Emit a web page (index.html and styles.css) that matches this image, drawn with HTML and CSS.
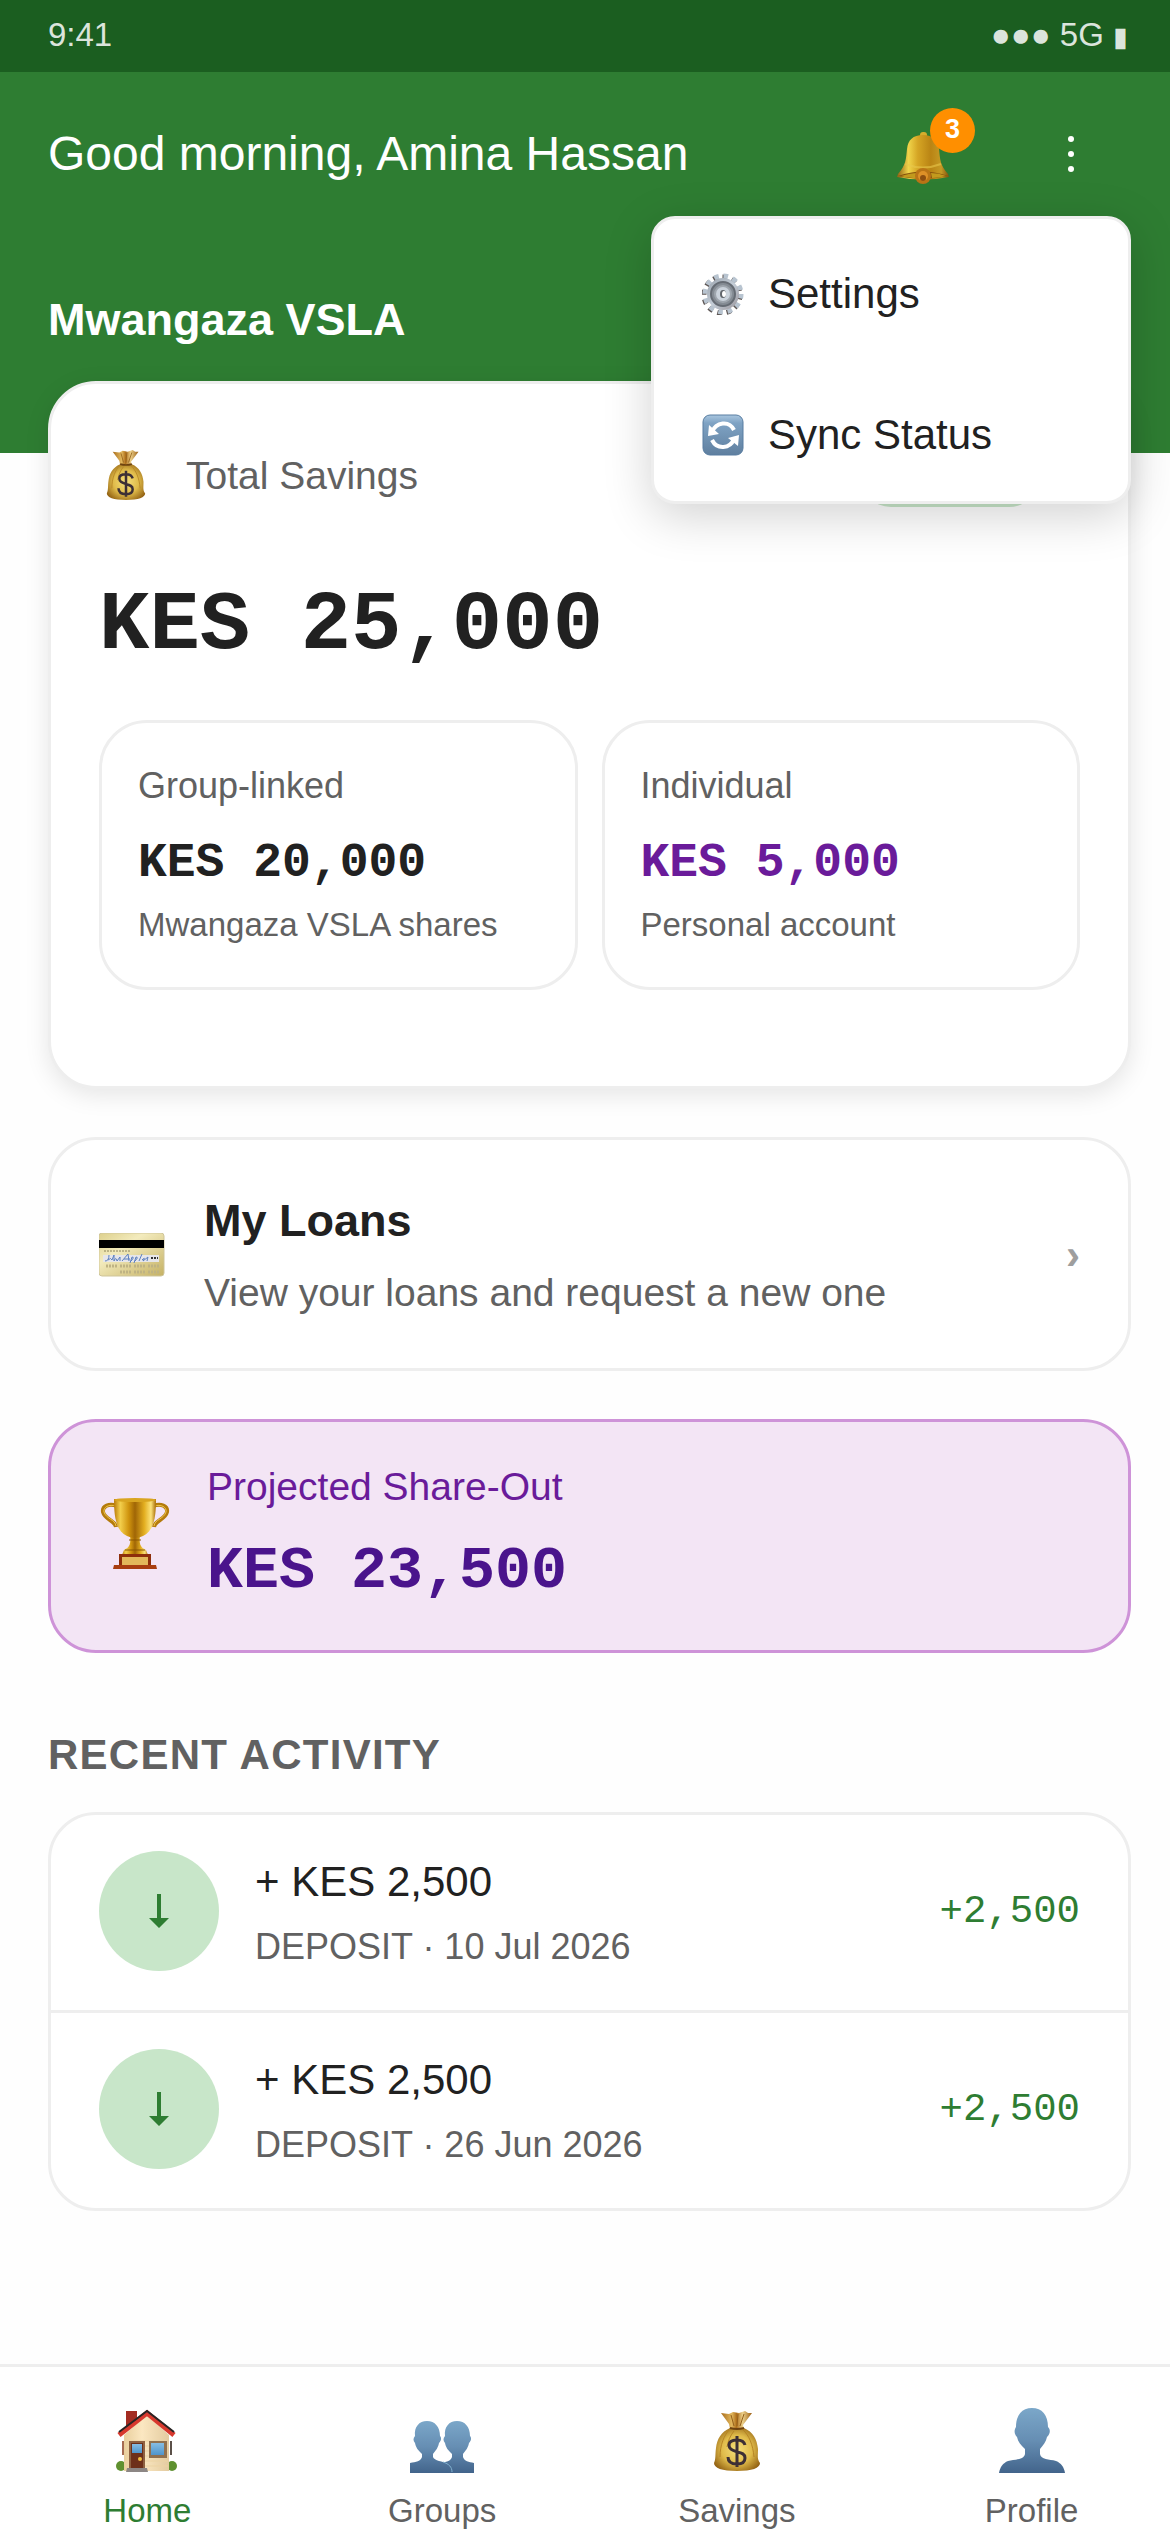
FILE: index.html
```html
<!DOCTYPE html>
<html lang="en">
<head>
<meta charset="utf-8">
<meta name="viewport" content="width=device-width, initial-scale=1">
<title>Mwangaza VSLA</title>
<link rel="stylesheet" href="styles.css">
</head>
<body>
<svg class="defs" aria-hidden="true">
  <defs>
    <linearGradient id="gold" x1="0" x2="1" y1="0" y2="0">
      <stop offset="0" stop-color="#8f5e12"/><stop offset=".22" stop-color="#f0d44a"/><stop offset=".4" stop-color="#d5a524"/><stop offset=".65" stop-color="#b98414"/><stop offset=".85" stop-color="#c59a25"/><stop offset="1" stop-color="#80500d"/>
    </linearGradient>
    <linearGradient id="cup" x1="0" x2="1" y1="0" y2="0">
      <stop offset="0" stop-color="#b97a08"/><stop offset=".15" stop-color="#f3cf4c"/><stop offset=".35" stop-color="#d0940e"/><stop offset=".5" stop-color="#a06606"/><stop offset=".72" stop-color="#e3ae20"/><stop offset=".88" stop-color="#fbe27a"/><stop offset="1" stop-color="#a96c06"/>
    </linearGradient>
    <radialGradient id="sack" cx=".5" cy=".5" r=".6">
      <stop offset="0" stop-color="#f6e07c"/><stop offset=".55" stop-color="#e0bb4a"/><stop offset="1" stop-color="#916012"/>
    </radialGradient>
    <linearGradient id="neck" x1="0" x2="1" y1="0" y2="0">
      <stop offset="0" stop-color="#a96d1c"/><stop offset=".35" stop-color="#e2b85e"/><stop offset=".5" stop-color="#b0701c"/><stop offset=".7" stop-color="#ecd08a"/><stop offset="1" stop-color="#9c5f14"/>
    </linearGradient>
    <linearGradient id="person" x1="0" x2="0" y1="0" y2="1">
      <stop offset="0" stop-color="#7ba7c9"/><stop offset=".5" stop-color="#668eb3"/><stop offset="1" stop-color="#42648b"/>
    </linearGradient>
    <linearGradient id="tile" x1="0" x2="0" y1="0" y2="1">
      <stop offset="0" stop-color="#a9c6df"/><stop offset=".2" stop-color="#7fa3c4"/><stop offset="1" stop-color="#5f7f9f"/>
    </linearGradient>
    <linearGradient id="steel" x1="0" x2="1" y1="0" y2="1">
      <stop offset="0" stop-color="#9aa3ad"/><stop offset=".5" stop-color="#c3ccd6"/><stop offset="1" stop-color="#99949a"/>
    </linearGradient>
    <linearGradient id="plastic" x1="0" x2="1" y1="0" y2="1">
      <stop offset="0" stop-color="#ddd08c"/><stop offset=".35" stop-color="#f3ebbd"/><stop offset="1" stop-color="#c5b163"/>
    </linearGradient>
    <linearGradient id="wall" x1="0" x2="1" y1="0" y2="0">
      <stop offset="0" stop-color="#e9cf9d"/><stop offset=".4" stop-color="#fbe7c1"/><stop offset="1" stop-color="#e3cba0"/>
    </linearGradient>
    <linearGradient id="sky" x1="0" x2="0" y1="0" y2="1">
      <stop offset="0" stop-color="#86bde2"/><stop offset="1" stop-color="#4f95cc"/>
    </linearGradient>
    <symbol id="moneybag" viewBox="0 0 46 60">
      <path d="M7 2 15 3 19 1 25 2 31 0 34 2 38 2 29 14 30 18H16L15 13Z" fill="url(#neck)"/>
      <path d="M17 4 20 15M24 3 23 15M30 3 26 15" stroke="#94601b" stroke-width="1" fill="none"/>
      <path d="M16 17H30C39 21 43 28 44 38 44 45 43 48 46 52 46 57 38 60 23 60 8 60 0 57 0 52 2 48 1 44 2 37 3 28 7 21 16 17Z" fill="url(#sack)"/>
      <path d="M16 18C10 24 6 34 6 46M20 20C16 25 14 30 13 36M29 19C35 24 39 34 40 46" stroke="#b68424" stroke-width="1" fill="none"/>
      <path d="M16 17Q23 19 30 17" stroke="#6f4310" stroke-width="2" fill="none"/>
      <path d="M31 34C30 30 27 29 23 29 18 29 15 31 15 34 15 38 18 39 23 41 28 42 31 43 31 47 31 51 28 53 23 53 18 53 14 51 14 46M23 25V56" stroke="#3d2f35" stroke-width="3" fill="none"/>
    </symbol>
  </defs>
</svg>
<div class="app">
  <div class="status">
    <span>9:41</span>
    <span class="signal">●●● 5G <span class="battery">▮</span></span>
  </div>

  <header class="header">
    <div class="topbar">
      <p class="greeting">Good morning, Amina Hassan</p>
      <button class="icon-button" type="button" aria-label="Notifications">
        <svg width="52" height="60" viewBox="0 -8 52 60">
          <rect x="23" y="0" width="7" height="6" rx="3" fill="#d5ad2c"/>
          <path d="M26 3C36 3 41 8 42 17 43 27 43 33 51 42L52 45Q26 50 0 45L1 42C9 33 9 27 10 17 11 8 16 3 26 3Z" fill="url(#gold)"/>
          <path d="M8 32Q26 39 44 32" stroke="#e8c74b" stroke-width="2" fill="none" opacity=".6"/>
          <path d="M1 44Q26 35 51 44 26 50 1 44Z" fill="#85520e"/>
          <path d="M4 44Q14 41 20 41L22 46Q10 46 4 44ZM34 41Q42 41 49 44 42 46 35 46Z" fill="#c29a1d"/>
          <circle cx="26" cy="44" r="8" fill="#b97416"/><circle cx="26" cy="44" r="5" fill="#dd9027"/><circle cx="26" cy="46" r="3" fill="#8d4f10"/>
        </svg>
        <span class="badge">3</span>
      </button>
      <button class="icon-button" type="button" aria-label="More options" aria-expanded="true">
        <svg width="6" height="36" viewBox="0 0 6 36" fill="#fff"><circle cx="3" cy="3" r="3"/><circle cx="3" cy="18" r="3"/><circle cx="3" cy="33" r="3"/></svg>
      </button>
      <div class="menu">
        <button class="menu-item" type="button">
          <svg width="42" height="42" viewBox="0 0 42 42">
            <circle cx="21" cy="21" r="18" fill="none" stroke="#5d5654" stroke-width="5" stroke-dasharray="4.6 4.82" transform="translate(-1 1)"/>
            <circle cx="21" cy="21" r="18" fill="none" stroke="#b8c4d0" stroke-width="5" stroke-dasharray="4.6 4.82"/>
            <circle cx="21" cy="21" r="16" fill="url(#steel)"/>
            <circle cx="21" cy="21" r="12" fill="#858c94" stroke="#666c74" stroke-width="2"/>
            <circle cx="21" cy="21" r="9" fill="#9fa6ae"/><circle cx="21" cy="21" r="7" fill="#cbd3dc"/>
            <ellipse cx="21" cy="21" rx="3" ry="4" fill="#61656b"/><ellipse cx="22" cy="21" rx="2" ry="3" fill="#fff"/>
          </svg>
          Settings
        </button>
        <button class="menu-item" type="button">
          <svg width="42" height="42" viewBox="0 0 42 42">
            <rect x="1" y="1" width="40" height="40" rx="7" fill="url(#tile)" stroke="#587da1" stroke-width="1"/>
            <path d="M10 18C14 8 27 6 32 16" stroke="#fff" stroke-width="4" fill="none"/>
            <path d="M32 25C28 35 15 36 10 26" stroke="#fff" stroke-width="4" fill="none"/>
            <path d="M7 11 6 22 17 20ZM26 24 37 21 36 32Z" fill="#fff"/>
          </svg>
          Sync Status
        </button>
      </div>
    </div>
    <h1 class="group-name">Mwangaza VSLA</h1>
  </header>

  <main class="content">
    <section class="card savings">
      <div class="savings-head">
        <svg class="savings-icon" width="54" height="50"><use href="#moneybag"/></svg>
        <h2 class="label">Total Savings</h2>
        <span class="pill"></span>
      </div>
      <p class="total">KES 25,000</p>
      <div class="split">
        <div class="account">
          <h3 class="account-name">Group-linked</h3>
          <p class="account-sum">KES 20,000</p>
          <p class="account-note">Mwangaza VSLA shares</p>
        </div>
        <div class="account">
          <h3 class="account-name">Individual</h3>
          <p class="account-sum personal">KES 5,000</p>
          <p class="account-note">Personal account</p>
        </div>
      </div>
    </section>

    <a class="card loans" href="#loans">
      <span class="lead">
        <svg width="66" height="44" viewBox="0 0 66 44">
          <rect x="0" y="0" width="65" height="43" rx="3" fill="url(#plastic)" stroke="#cfc59a" stroke-width="1"/>
          <rect x="0" y="7" width="65" height="8" fill="#000"/>
          <path d="M5 18H31" stroke="#8b8259" stroke-width="1" stroke-dasharray="2 1"/>
          <rect x="4" y="22" width="56" height="7" fill="#e6e6ea"/>
          <path d="M6 28Q10 28 10 22M9 27Q12 24 13 27L15 22 15 28Q17 23 18 28L21 24V28M23 28 29 21 30 28M25 26H31M31 30 33 24Q36 24 32 28M35 30 37 24Q40 24 36 28M40 28 43 21M43 27Q47 23 44 28L49 24 48 28" stroke="#5b7fc0" stroke-width="1" fill="none"/>
          <path d="M52 25H59" stroke="#333" stroke-width="2" stroke-dasharray="2 1"/>
          <path d="M7 33H63M21 39H63" stroke="#bfb383" stroke-width="3" stroke-dasharray="2 1 2 1 2 1 2 3"/>
        </svg>
      </span>
      <span class="loans-text">
        <strong class="loans-title">My Loans</strong>
        <span class="label">View your loans and request a new one</span>
      </span>
      <span class="chevron">›</span>
    </a>

    <section class="card share">
      <span class="lead">
        <svg width="72" height="72" viewBox="0 0 72 72">
          <g fill="none" stroke="#b47b0c" stroke-width="4"><path d="M18 8C10 5 3 8 4 14 6 22 16 22 17 29"/><path d="M54 8C62 5 69 8 68 14 66 22 56 22 55 29"/></g>
          <g fill="none" stroke="#efc64a" stroke-width="1"><path d="M17 8C10 6 4 9 5 14 7 21 16 21 17 28"/><path d="M55 8C62 6 68 9 67 14 65 21 56 21 55 28"/></g>
          <path d="M31 36H41C40 46 41 49 47 52L49 57H23L25 52C31 49 32 46 31 36Z" fill="url(#cup)"/>
          <path d="M15 1H57C57 22 54 33 44 38Q36 42 28 38C18 33 15 22 15 1Z" fill="url(#cup)"/>
          <ellipse cx="36" cy="2" rx="21" ry="2" fill="#d9a520"/>
          <path d="M30 42H42M26 52H46" stroke="#8b5705" stroke-width="1"/>
          <path d="M20 56H52V67H20Z" fill="#8e2f0b"/><path d="M15 67H57L58 71H14Z" fill="#a83e10"/>
          <rect x="23" y="59" width="26" height="8" fill="#e2b85a"/>
        </svg>
      </span>
      <div>
        <h2 class="label share-label">Projected Share-Out</h2>
        <p class="share-sum">KES 23,500</p>
      </div>
    </section>

    <h2 class="section-title">RECENT ACTIVITY</h2>
    <ul class="activity">
      <li class="entry">
        <span class="entry-icon"><svg width="20" height="34" viewBox="0 0 20 34" fill="#2e7d32"><path d="M8 0H12V24H20L10 34 0 24H8Z"/></svg></span>
        <div class="entry-text">
          <p class="entry-title">+ KES 2,500</p>
          <p class="entry-note">DEPOSIT · 10 Jul 2026</p>
        </div>
        <span class="entry-sum">+2,500</span>
      </li>
      <li class="entry">
        <span class="entry-icon"><svg width="20" height="34" viewBox="0 0 20 34" fill="#2e7d32"><path d="M8 0H12V24H20L10 34 0 24H8Z"/></svg></span>
        <div class="entry-text">
          <p class="entry-title">+ KES 2,500</p>
          <p class="entry-note">DEPOSIT · 26 Jun 2026</p>
        </div>
        <span class="entry-sum">+2,500</span>
      </li>
    </ul>
  </main>

  <nav class="tabs">
    <a class="tab active" href="#home">
      <svg width="66" height="66" viewBox="0 0 66 66">
        <circle cx="7" cy="59" r="5" fill="#5f9130"/><circle cx="58" cy="59" r="5" fill="#5f9130"/>
        <path d="M12 4H23V14L12 24Z" fill="#a32c22"/>
        <rect x="8" y="34" width="2" height="14" fill="#a56b52"/><rect x="56" y="34" width="2" height="14" fill="#5b5049"/>
        <path d="M10 28 33 8 55 28V64H10Z" fill="url(#wall)"/>
        <path d="M11 34H54M11 39H54M11 44H54M11 49H54M11 54H54M11 59H54" stroke="#ecd3a3" stroke-width="1"/>
        <path d="M5 28 33 6 60 28" stroke="#d8392e" stroke-width="5" fill="none"/>
        <path d="M5 25 33 4 60 25" stroke="#282424" stroke-width="2" fill="none"/>
        <rect x="15" y="34" width="16" height="28" fill="#8d6040"/><rect x="17" y="36" width="12" height="26" fill="#6d301a"/>
        <rect x="18" y="37" width="10" height="9" fill="url(#sky)"/><circle cx="26" cy="52" r="2" fill="#f2c041"/>
        <rect x="35" y="34" width="18" height="17" fill="#90714f"/><rect x="37" y="36" width="13" height="12" fill="url(#sky)"/>
        <path d="M13 61H33L34 65H12Z" fill="#8d8785"/>
      </svg>
      Home
    </a>
    <a class="tab" href="#groups">
      <svg width="66" height="66" viewBox="0 0 66 66" fill="url(#person)">
        <path d="M48 14C56 14 61 20 61 29 63 31 62 34 60 36 59 41 57 43 54 47V50C55 54 60 55 65 56V66H31V56C37 55 42 54 43 50V47C39 43 37 41 36 36 34 34 34 31 36 29 35 20 40 14 48 14Z"/>
        <path d="M18 14C26 14 31 20 31 29 33 31 32 34 30 36 29 41 27 43 24 47V50C25 54 34 54 39 57Q43 60 44 66H1V56C7 55 12 54 13 50V47C9 43 7 41 6 36 4 34 4 31 6 29 5 20 10 14 18 14Z"/>
        <path d="M34 55C40 57 43 60 43 65" fill="none" stroke="#82b2d0" stroke-width="1"/>
      </svg>
      Groups
    </a>
    <a class="tab" href="#savings">
      <svg width="66" height="66"><use href="#moneybag" x="10" y="4" width="46" height="60"/></svg>
      Savings
    </a>
    <a class="tab" href="#profile">
      <svg width="66" height="66" viewBox="0 0 66 66">
        <path d="M33 1C43 1 49 8 49 20 52 23 51 27 48 30 47 35 44 38 41 42V47C42 53 50 52 57 54 62 56 65 60 66 66H0C1 60 4 56 9 54 16 52 25 53 26 47V42C22 38 19 35 18 30 15 27 15 23 17 20 17 8 23 1 33 1Z" fill="url(#person)"/>
      </svg>
      Profile
    </a>
  </nav>
</div>
</body>
</html>
```
FILE: styles.css
```css
* {
  box-sizing: border-box;
}

html {
  overflow: hidden auto;
}

body,
h1,
h2,
h3,
p,
ul {
  margin: 0;
  padding: 0;
}

body {
  font-family: "Liberation Sans", Arial, Helvetica, sans-serif;
  color: #212121;
  background: #fefefe;
}

button {
  border: 0;
  padding: 0;
  background: none;
  font: inherit;
  color: inherit;
}

a {
  color: inherit;
  text-decoration: none;
}

svg {
  display: block;
  flex: none;
}

.defs {
  position: absolute;
  width: 0;
  height: 0;
}

/* The shell runs slightly past the right edge of the window. */
.app {
  display: flex;
  flex-direction: column;
  min-height: 100vh;
  margin-right: -9px;
}

.status {
  display: flex;
  justify-content: space-between;
  padding: 15px 48px 18px;
  background: #1b5e20;
  color: rgba(255, 255, 255, 0.85);
  font-size: 33px;
  line-height: 39px;
}

.signal {
  padding-right: 3px;
}

.battery {
  font-size: 27px;
  line-height: 1;
}

.header {
  padding: 10px 48px 106px;
  background: #2e7d32;
  color: #fff;
}

.topbar {
  position: relative;
  display: flex;
  align-items: center;
  gap: 28px;
  height: 144px;
}

.greeting {
  flex: 1;
  font-size: 48px;
  line-height: 54px;
}

.icon-button {
  position: relative;
  display: flex;
  align-items: center;
  justify-content: center;
  width: 120px;
  height: 120px;
}

.badge {
  position: absolute;
  top: 14px;
  right: 8px;
  width: 45px;
  height: 45px;
  border-radius: 50%;
  background: #ff8f00;
  font-size: 27px;
  font-weight: 700;
  line-height: 42px;
  text-align: center;
}

.menu {
  position: absolute;
  top: 134px;
  right: 0;
  z-index: 2;
  width: 480px;
  border: 3px solid #eee;
  border-radius: 24px;
  background: #fff;
  box-shadow: 0 12px 48px rgba(0, 0, 0, 0.18);
  color: #212121;
}

.menu-item {
  display: flex;
  align-items: center;
  gap: 24px;
  width: 100%;
  height: 141px;
  padding: 9px 48px 0;
  font-size: 42px;
  line-height: 48px;
}

.group-name {
  margin-top: 67px;
  font-size: 45px;
  line-height: 54px;
}

.content {
  flex: 1;
  padding: 0 48px 96px;
}

.card {
  display: flex;
  border: 3px solid #eee;
  border-radius: 48px;
  background: #fff;
}

.label {
  color: #616161;
  font-size: 39px;
  font-weight: 400;
  line-height: 45px;
}

.savings {
  position: relative;
  flex-direction: column;
  margin-top: -72px;
  padding: 48px 48px 96px;
  box-shadow: 0 6px 24px rgba(0, 0, 0, 0.1);
}

.savings-head {
  display: flex;
  align-items: center;
  gap: 33px;
  height: 86px;
}

.pill {
  width: 182px;
  height: 64px;
  margin-left: auto;
  margin-right: 39px;
  border-radius: 32px;
  background: #c8e6c9;
}

.total,
.account-sum,
.share-sum,
.entry-sum {
  font-family: "Liberation Mono", "Courier New", monospace;
}

.total {
  margin-top: 60px;
  font-size: 84px;
  font-weight: 700;
  line-height: 96px;
}

.split {
  display: grid;
  grid-template-columns: 1fr 1fr;
  gap: 24px;
  margin-top: 46px;
}

.account {
  padding: 42px 36px 43px;
  border: 3px solid #eee;
  border-radius: 48px;
}

.account-name {
  color: #616161;
  font-size: 36px;
  font-weight: 400;
  line-height: 42px;
}

.account-sum {
  margin-top: 29px;
  font-size: 48px;
  font-weight: 700;
  line-height: 54px;
}

.personal {
  color: #6a1b9a;
}

.account-note {
  margin-top: 15px;
  color: #616161;
  font-size: 33px;
  line-height: 39px;
}

.lead {
  flex: none;
  width: 72px;
}

.loans {
  align-items: center;
  gap: 33px;
  margin-top: 48px;
  padding: 54px 48px 53px;
}

.loans-text {
  display: flex;
  flex: 1;
  flex-direction: column;
  gap: 22px;
}

.loans-title {
  font-size: 45px;
  line-height: 54px;
}

.chevron {
  color: #9e9e9e;
  font-size: 42px;
  font-weight: 700;
  line-height: 48px;
}

.share {
  align-items: center;
  gap: 36px;
  margin-top: 48px;
  padding: 42px 48px 46px;
  border-color: #ce93d8;
  background: #f3e5f5;
}

.share-label {
  color: #6a1b9a;
}

.share-sum {
  margin-top: 29px;
  color: #4a148c;
  font-size: 60px;
  font-weight: 700;
  line-height: 66px;
}

.section-title {
  margin-top: 78px;
  color: #616161;
  font-size: 42px;
  line-height: 48px;
  letter-spacing: 0.03em;
}

.activity {
  margin-top: 33px;
  border: 3px solid #eee;
  border-radius: 48px;
  background: #fff;
  list-style: none;
}

.entry {
  display: flex;
  align-items: center;
  gap: 36px;
  padding: 36px 48px 39px;
}

.entry + .entry {
  border-top: 3px solid #eee;
}

.entry-icon {
  display: flex;
  align-items: center;
  justify-content: center;
  width: 120px;
  height: 120px;
  border-radius: 50%;
  background: #c8e6c9;
}

.entry-text {
  flex: 1;
  padding-top: 3px;
}

.entry-title {
  font-size: 42px;
  line-height: 48px;
}

.entry-note {
  margin-top: 20px;
  color: #616161;
  font-size: 36px;
  line-height: 42px;
}

.entry-sum {
  padding-top: 3px;
  color: #2e7d32;
  font-size: 39px;
  line-height: 45px;
}

.tabs {
  display: grid;
  grid-template-columns: repeat(4, 1fr);
  padding-top: 40px;
  border-top: 3px solid #eee;
  background: #fff;
}

.tab {
  display: flex;
  flex-direction: column;
  align-items: center;
  gap: 18px;
  padding-bottom: 2px;
  color: #616161;
  font-size: 33px;
  line-height: 39px;
}

.active {
  color: #2e7d32;
}
```
